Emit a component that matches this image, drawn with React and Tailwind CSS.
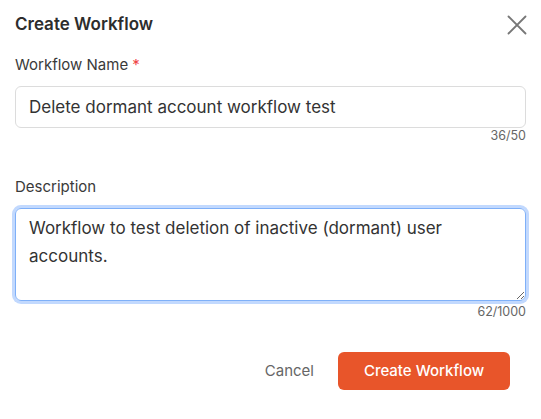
import { useState } from 'react'

export default function App() {
  const [name, setName] = useState('Delete dormant account workflow test')
  const [desc, setDesc] = useState(
    'Workflow to test deletion of inactive (dormant) user accounts.'
  )

  return (
    <div
      className="w-[541px] h-[419px] bg-white text-[#333] px-[15px]"
      style={{ fontFamily: 'Inter, "Noto Sans", sans-serif' }}
    >
      <div className="h-[50px] flex items-center justify-between">
        <h2 className="text-[17px] font-semibold text-[#2d2d2d]">Create Workflow</h2>
        <button className="text-[#777] mr-[-3px]">
          <svg width="24" height="24" viewBox="0 0 24 24" fill="none" stroke="currentColor" strokeWidth="1.8" strokeLinecap="round">
            <path d="M3.5 3.5l17 17M20.5 3.5l-17 17" />
          </svg>
        </button>
      </div>

      <label className="block mt-[5px] text-[15px] leading-5 text-[#3a3a3a]">
        Workflow Name <span className="text-[#ef4444]">*</span>
      </label>
      <input
        value={name}
        maxLength={50}
        onChange={(e) => setName(e.target.value)}
        className="mt-[11px] w-full h-[42px] rounded-md border border-[#dcdcdc] px-[13px] text-[17px] text-[#333] outline-none"
      />
      <div className="text-right text-[12.5px] leading-4 text-[#666]">{name.length}/50</div>

      <label className="block mt-[33px] text-[15px] leading-5 text-[#3a3a3a]">Description</label>
      <textarea
        autoFocus
        value={desc}
        maxLength={1000}
        onChange={(e) => setDesc(e.target.value)}
        className="mt-[11px] block w-full h-[93px] rounded-md border border-[#7fb0f8] ring-[3px] ring-[#c2d9fe] px-[13px] py-[5px] text-[17px] leading-[28px] text-[#333] outline-none resize-y"
      />
      <div className="mt-[3px] text-right text-[12.5px] leading-4 text-[#666]">{desc.length}/1000</div>

      <div className="mt-8 flex items-center justify-end gap-[20px] pr-[16px]">
        <button className="text-[15px] text-[#666] px-1">Cancel</button>
        <button className="h-[38px] w-[172px] rounded-md bg-[#e8552a] text-white text-[15px] font-medium">
          Create Workflow
        </button>
      </div>
    </div>
  )
}
